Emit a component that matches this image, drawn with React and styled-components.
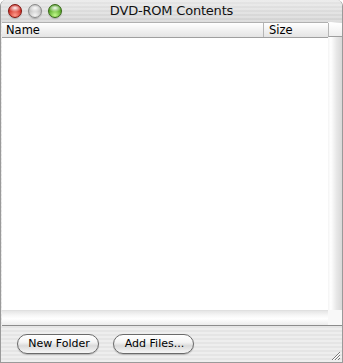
import styled, { createGlobalStyle } from "styled-components";

const GlobalStyle = createGlobalStyle`
  html, body {
    margin: 0;
    padding: 0;
    background: #ffffff;
  }
  body {
    font-family: "DejaVu Sans", "Liberation Sans", sans-serif;
  }
`;

const Window = styled.div`
  width: 343px;
  height: 363px;
  box-sizing: border-box;
  display: flex;
  flex-direction: column;
  border-radius: 6px 6px 0 0;
  overflow: hidden;
  background: repeating-linear-gradient(
    to bottom,
    #eeeeee 0px,
    #eeeeee 2px,
    #e5e5e5 2px,
    #e5e5e5 4px
  );
  border: 1px solid #9a9a9a;
  border-top: none;
`;

const TitleBar = styled.div`
  height: 22px;
  flex: none;
  display: flex;
  align-items: center;
  position: relative;
  padding-left: 7px;
  gap: 6px;
  background: repeating-linear-gradient(
      to bottom,
      rgba(255, 255, 255, 0.25) 0px,
      rgba(255, 255, 255, 0.25) 2px,
      rgba(255, 255, 255, 0) 2px,
      rgba(255, 255, 255, 0) 4px
    ),
    linear-gradient(to bottom, #e6e6e6 0%, #d2d2d2 100%);
`;

const Light = styled.span`
  width: 14px;
  height: 14px;
  border-radius: 50%;
  box-sizing: border-box;
  border: 1px solid ${(p) => p.$edge};
  background: radial-gradient(
      ellipse 7px 4px at 50% 25%,
      rgba(255, 255, 255, 0.95) 0%,
      rgba(255, 255, 255, 0) 100%
    ),
    radial-gradient(circle at 50% 85%, ${(p) => p.$light} 0%, ${(p) => p.$base} 75%);
  box-shadow: 0 1px 1px rgba(0, 0, 0, 0.2);
`;

const Title = styled.div`
  position: absolute;
  left: 0;
  right: 0;
  top: 3px;
  text-align: center;
  font-size: 13px;
  color: #111;
  letter-spacing: -0.2px;
`;

const ListFrame = styled.div`
  flex: 1;
  display: grid;
  grid-template-columns: 1fr 14px;
  grid-template-rows: 1fr 15px;
  margin-left: 1px;
  border-bottom: 1px solid #8c8c8c;
`;

const Table = styled.div`
  display: flex;
  flex-direction: column;
  background: #ffffff;
  border-top: 1px solid #b0b0b0;
`;

const HeaderRow = styled.div`
  height: 14px;
  display: grid;
  grid-template-columns: 262px 1fr;
  background: linear-gradient(to bottom, #ffffff 0%, #f1f1f1 50%, #e4e4e4 100%);
  border-bottom: 1px solid #9f9f9f;
`;

const HeaderCell = styled.div`
  font-size: 11.5px;
  line-height: 14px;
  padding-left: ${(p) => p.$pad}px;
  color: #000;
  border-right: ${(p) => (p.$divider ? "1px solid #b5b5b5" : "none")};
`;

const HeaderCorner = styled.div`
  height: 14px;
  margin-top: 1px;
  box-sizing: border-box;
  border-bottom: 1px solid #9f9f9f;
  border-left: 1px solid #b5b5b5;
  background: linear-gradient(to bottom, #ffffff 0%, #eeeeee 100%);
`;

const VScroll = styled.div`
  display: flex;
  flex-direction: column;
  background: linear-gradient(
    to right,
    #f4f4f4 0%,
    #ffffff 20%,
    #e8e8e8 60%,
    #d8d8d8 100%
  );
`;

const HScroll = styled.div`
  background: linear-gradient(
    to bottom,
    #e6e6e6 0%,
    #f6f6f6 30%,
    #ffffff 55%,
    #ececec 100%
  );
  border-top: 1px solid #e0e0e0;
`;

const Corner = styled.div`
  background: #f8f8f8;
`;

const BottomWrap = styled.div`
  position: relative;
`;

const BottomBar = styled.div`
  height: 35px;
  flex: none;
  display: flex;
  align-items: center;
  gap: 14px;
  padding-left: 16px;
  padding-bottom: 1px;
`;

const PillButton = styled.button`
  height: 20px;
  width: ${(p) => p.$w}px;
  border-radius: 10px;
  border: 1px solid #6a6a6a;
  font-family: "DejaVu Sans", "Liberation Sans", sans-serif;
  font-size: 11px;
  color: #000;
  padding: 0 0 0 2px;
  background: linear-gradient(
    to bottom,
    #ffffff 0%,
    #f4f4f4 40%,
    #dadada 60%,
    #f6f6f6 100%
  );
  box-shadow: 0 1px 1px rgba(0, 0, 0, 0.2);
`;

const Grip = styled.svg`
  position: absolute;
  right: 1px;
  bottom: 1px;
`;

export default function App() {
  return (
    <>
      <GlobalStyle />
      <Window>
        <TitleBar>
          <Light $base="#c41810" $light="#ff9a8a" $edge="#7e120c" />
          <Light $base="#b4b4b4" $light="#f4f4f4" $edge="#888888" />
          <Light $base="#3f9412" $light="#c0f88a" $edge="#356614" />
          <Title>DVD-ROM Contents</Title>
        </TitleBar>
        <ListFrame>
          <Table>
            <HeaderRow>
              <HeaderCell $pad={4} $divider>Name</HeaderCell>
              <HeaderCell $pad={5}>Size</HeaderCell>
            </HeaderRow>
          </Table>
          <VScroll>
            <HeaderCorner />
          </VScroll>
          <HScroll />
          <Corner />
        </ListFrame>
        <BottomWrap>
          <BottomBar>
            <PillButton $w={82}>New Folder</PillButton>
            <PillButton $w={81}>Add Files...</PillButton>
          </BottomBar>
          <Grip width="12" height="12" viewBox="0 0 12 12">
            <path d="M11 3 L3 11 M11 6 L6 11 M11 9 L9 11" stroke="#7a7a7a" strokeWidth="1" />
            <path d="M11 4 L4 11 M11 7 L7 11" stroke="#ffffff" strokeWidth="1" />
          </Grip>
        </BottomWrap>
      </Window>
    </>
  );
}
